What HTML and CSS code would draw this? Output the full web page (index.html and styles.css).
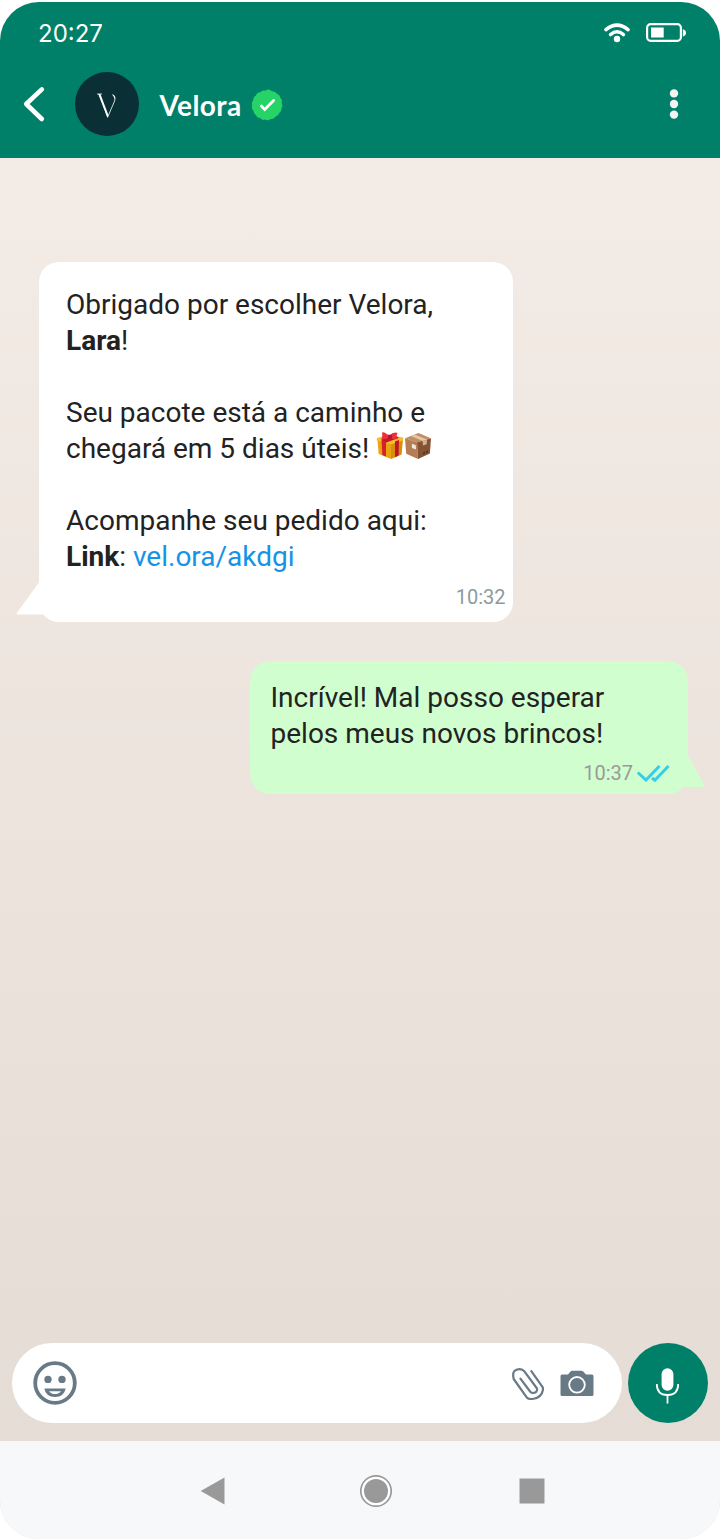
FILE: index.html
```html
<!DOCTYPE html>
<html lang="pt-BR">
<head>
<meta charset="utf-8">
<title>Velora</title>
<link rel="stylesheet" href="styles.css">
</head>
<body>
<div class="phone">
  <header class="header">
    <div class="status">
      <span class="clock">20:27</span>
      <svg class="wifi" width="28" height="22" viewBox="0 0 28 22" fill="none" stroke="#fff" stroke-linecap="round"><path d="M3 7.7Q14 -1.5 25 7.7" stroke-width="3.6"/><path d="M7.6 12.5Q14 7 20.4 12.5" stroke-width="3.6"/><circle cx="14" cy="17" r="3.2" fill="#fff" stroke="none"/></svg>
      <svg class="battery" width="42" height="22" viewBox="0 0 42 22"><rect x="2.1" y="2.1" width="33.8" height="16.8" rx="3.6" fill="none" stroke="#fff" stroke-width="2.2"/><rect x="6" y="5.5" width="12.7" height="10" fill="#fff"/><path d="M37.8 7.2Q41 7.8 41 10.8T37.8 14.4Z" fill="#fff"/></svg>
    </div>
    <div class="bar">
      <svg class="back" width="24" height="38" viewBox="0 0 24 38"><path d="M19.8 4.4 4.2 19 19.8 34" fill="none" stroke="#fff" stroke-width="4.6" stroke-linecap="round" stroke-linejoin="round"/></svg>
      <svg class="avatar" width="64" height="64" viewBox="0 0 64 64"><circle cx="32" cy="32" r="32" fill="#0a2f34"/><path d="M22.1 22H27M24 22.3 32.6 45M32.7 45 39.6 29Q41 24.2 37.8 23.4" fill="none" stroke="#fff" stroke-width=".8"/><path d="M23.3 22H25.4L33.4 43 32.8 46 32.2 45Z" fill="#fff"/><path d="M36.8 22.2Q40.8 22.8 40 27.4Q39.4 24 36.8 22.2Z" fill="#fff"/></svg>
      <span class="name">Velora</span>
      <svg class="verified" width="32" height="32" viewBox="-16 -16 32 32"><path d="M0-15.3Q3-15.9 5-13.7Q8.3-14 10-11.2Q13-10.2 13.2-7.2Q15.8-5.2 14.6-2.2Q16.3.7 14.5 3.2Q14.9 6.3 12.3 8Q11.5 11.1 8.5 11.8Q6.7 14.5 3.6 14Q1 16.3-1.8 14.5Q-4.9 15.7-6.9 13.1Q-10.1 13-11.1 10.1Q-13.9 8.5-13.6 5.5Q-15.9 3.3-14.8.5Q-15.8-2.6-13.8-4.8Q-13.9-8.1-11.1-9.6Q-9.8-12.7-6.8-12.7Q-4.6-15.2-1.7-14.3Z" fill="#25d366"/><path d="M-5.6 1.1-2.3 4.4 6.6-4.5" fill="none" stroke="#fff" stroke-width="2.8" stroke-linecap="round"/></svg>
      <svg class="more" width="12" height="32" viewBox="0 0 12 32" fill="#f2f2f2"><circle cx="6" cy="5.4" r="4.2"/><circle cx="6" cy="16" r="4.2"/><circle cx="6" cy="26.6" r="4.2"/></svg>
    </div>
  </header>
  <main class="chat">
    <div class="bubble incoming">
      <p>Obrigado por escolher Velora,<br><b>Lara</b>!</p>
      <p>Seu pacote está a caminho e<br>chegará em 5 dias úteis! <svg class="emoji" width="28" height="28" viewBox="0 0 28 28"><path d="M1.4 7 15 10.8 15 27 2.7 22Z" fill="#e9a511"/><path d="M15 10.8 27 7 25.6 22.4 15 27Z" fill="#d98d0b"/><path d="M.8 6 12.5 3 27.3 5.5V8.5L15 12.3.8 8.5Z" fill="#f6bd2e"/><path d="M5.5 7 10 8.5V24.5L6.3 23Z" fill="#d5212d"/><path d="M19 9.5 23 8 22.6 23.6 19 25.2Z" fill="#bd1727"/><path d="M5.5 7 20 4 23 5.7 10.5 10.5Z" fill="#c81628"/><path d="M13 4Q8-1 5.8.8 7 3.7 5.4 6.7 9 8 13.4 5.5 18 8.4 22 6.7L20.4 4 21.6.9Q17-.4 13 4Z" fill="#ed303d"/><path d="M12 2.7h4v4h-4z" fill="#ba1528"/></svg><svg class="emoji" width="28" height="28" viewBox="0 0 28 28"><path d="M1 6.2 13 10.2 14 27 2.2 21.8Z" fill="#b57d54"/><path d="M13 10.2 27 6.2 25.9 21.6 14 27Z" fill="#855333"/><path d="M1 6.2 14.4 1 27 6.2 13 10.5Z" fill="#c18d62"/><path d="M6.8 4 10.7 2.4 23 7.5 18.6 9Z" fill="#e2c7a6"/><path d="M18.6 9 23 7.5 22.7 12.3 19 13.5Z" fill="#d2b28f"/><path d="M7.8 11.8 11.8 13.2 12 17.5 8 16Z" fill="#eee8df"/><path d="M19 20.5 21 19.6V22L19 22.8Z M22 19 24 18.2V20.5L22 21.4Z" fill="#563622"/></svg></p>
      <p>Acompanhe seu pedido aqui:<br><b>Link</b>: <a class="link">vel.ora/akdgi</a></p>
      <div class="meta">10:32</div>
      <svg class="tail tail-left" width="28" height="36" viewBox="0 0 28 36"><path d="M24 0 27.5 4V33.5H1.5Q0 33.5 .8 32Z" fill="#fff"/></svg>
    </div>
    <div class="bubble outgoing">
      <p>Incrível! Mal posso esperar<br>pelos meus novos brincos!</p>
      <div class="meta">10:37<svg class="ticks" width="34" height="18" viewBox="0 0 34 18" fill="none" stroke="#34cfe9" stroke-width="3"><path d="M.8 8.5 9 16 22.5 2M15 14 17.9 16.2 31.5 2"/></svg></div>
      <svg class="tail tail-right" width="24" height="35" viewBox="-4 0 24 35"><path d="M3 0 19.4 30.2Q20 32 18.5 32H-3V0Z" fill="#d0fecf"/></svg>
    </div>
  </main>
  <div class="composer">
    <div class="field">
      <svg class="smile" width="44" height="44" viewBox="0 0 44 44" fill="#687a86"><circle cx="22" cy="22" r="19.8" fill="none" stroke="#687a86" stroke-width="3.8"/><circle cx="15" cy="18.4" r="3.7"/><circle cx="29" cy="18.4" r="3.7"/><path d="M11.3 27.5H32.7Q31 36 22 36T11.3 27.5Z"/><path d="M16 30.2H28Q26 33 22 33T16 30.2Z" fill="#fff"/></svg>
      <svg class="clip" width="34" height="34" viewBox="0 0 34 34" fill="none" stroke="#687a86" stroke-width="2.2" stroke-linecap="round" stroke-linejoin="round"><path d="M13.2 4.2Q11.5 2 8.5 2.1 1.5 2.6 2.2 9.1L2.7 12 15.7 30.3Q17 32.1 21.5 32 30.5 31 32 22.7L31.8 20.3 20.3 4.2M13.2 4.2 26 21.5Q26.8 25.3 22.4 26 20.6 26.1 19.5 25L9.4 11.6"/></svg>
      <svg class="camera" width="34" height="27" viewBox="0 0 34 27"><path d="M2 4.5H8L10.5 1.4Q11.2.7 12.5.7H21.2Q22.5.7 23.2 1.5L26 4.5H32Q33.5 4.5 33.5 6V24.5Q33.5 26 32 26H2Q.5 26 .5 24.5V6Q.5 4.5 2 4.5Z" fill="#687a86"/><circle cx="17" cy="14.8" r="7.8" fill="none" stroke="#fff" stroke-width="1.8"/></svg>
    </div>
    <div class="mic"><svg width="26" height="38" viewBox="0 0 26 38"><rect x="6.6" y="1.2" width="11.8" height="22.5" rx="5.9" fill="#fff"/><path d="M1.8 17Q1.8 28 12.5 28T23.2 17M12.5 28V36.5" fill="none" stroke="#fff" stroke-width="1.8"/></svg></div>
  </div>
  <nav class="nav">
    <svg width="26" height="28" viewBox="0 0 26 28"><path d="M.7 14 24.5.5V27.5Z" fill="#999"/></svg>
    <svg class="home" width="34" height="34" viewBox="0 0 34 34"><circle cx="17" cy="17" r="15.2" fill="#fff" stroke="#999" stroke-width="1.7"/><circle cx="17" cy="17" r="12" fill="#999"/></svg>
    <svg class="recent" width="26" height="26" viewBox="0 0 26 26"><path d="M.5.5h25v25H.5z" fill="#999"/></svg>
  </nav>
</div>
</body>
</html>
```
FILE: styles.css
```css
* { box-sizing: border-box; }
body { margin: 0; padding-top: 2px; background: #fff; }
svg { display: block; flex: none; }
.phone { width: 720px; height: 1537px; border-radius: 39px; overflow: hidden; display: flex; flex-direction: column; background: linear-gradient(#f3ebe5 10%, #e5dcd5 94%); }
.header { height: 156px; background: #008069; color: #fff; }
.status { display: flex; align-items: center; height: 62px; padding: 0 33px 0 38px; }
.clock { font: 400 24px/30px Inter, sans-serif; padding-top: 2px; }
.wifi { margin-left: auto; }
.battery { margin-left: 14px; }
.bar { display: flex; align-items: center; height: 80px; padding: 0 40px 0 22px; }
.avatar { margin-left: 29px; }
.name { margin-left: 20.5px; font: 700 28px/36px Lato, sans-serif; letter-spacing: 0.4px; padding-top: 1px; }
.verified { margin-left: 9px; margin-top: 1px; }
.more { margin-left: auto; }
.chat { flex: 1; display: flex; flex-direction: column; padding: 104px 32px 0 38.5px; }
.bubble { position: relative; border-radius: 20px; font: 400 28px/36px Roboto, sans-serif; color: #222; }
.bubble p { margin: 0; white-space: nowrap; }
.bubble p + p { margin-top: 36px; }
.incoming { width: 474.5px; height: 360px; padding: 25px 7.5px 0 27.5px; background: #fff; }
.outgoing { align-self: flex-end; width: 438px; height: 133px; margin-top: 39px; padding: 19px 17px 0 20.5px; background: #d0fecf; }
.emoji { display: inline-block; vertical-align: -2px; }
.link { color: #1593e7; }
.meta { display: flex; justify-content: flex-end; align-items: center; font-size: 20px; line-height: 24px; color: #8a9ba3; padding-top: 10px; }
.outgoing .meta { color: #999; padding-top: 9px; }
.ticks { margin-left: 4px; }
.tail { position: absolute; }
.tail-left { left: -23px; bottom: 5px; }
.tail-right { right: -17px; bottom: 4px; }
.composer { display: flex; gap: 6px; padding: 0 12px 18px; }
.field { display: flex; align-items: center; width: 610px; height: 80px; padding: 0 28.5px 0 21px; border-radius: 40px; background: #fff; }
.smile { margin-top: -1px; }
.clip { margin-left: auto; margin-top: 2px; }
.camera { margin-left: 15px; }
.mic { display: flex; align-items: center; justify-content: center; width: 80px; height: 80px; padding-top: 5px; border-radius: 50%; background: #008069; }
.nav { display: flex; align-items: center; height: 98px; padding: 2px 0 0 200px; background: #f7f8fa; }
.home { margin-left: 133px; }
.recent { margin-left: 126px; }
```
